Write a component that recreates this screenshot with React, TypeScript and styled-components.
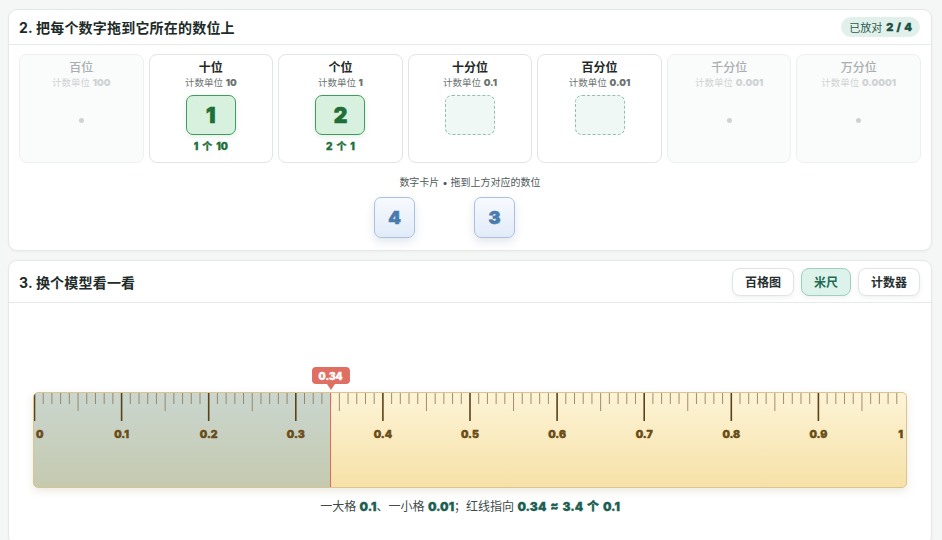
import { createGlobalStyle, styled, css } from "styled-components";

const GlobalStyle = createGlobalStyle`
  html, body {
    margin: 0;
    padding: 0;
    background: #f5f6f6;
  }
  body {
    font-family: Inter, "Noto Sans CJK SC", sans-serif;
    color: #1f2a28;
  }
`;

const Page = styled.div`
  display: flex;
  flex-direction: column;
  gap: 9px;
  padding: 9px 10px 0 8px;
`;

const Card = styled.section`
  background: #fff;
  border: 1px solid #e4e8e7;
  border-radius: 9px;
  box-shadow: 0 1px 3px rgba(30, 50, 45, 0.04);
`;

const CardHeader = styled.header<{ $h: number }>`
  display: flex;
  align-items: center;
  justify-content: space-between;
  height: ${(p) => p.$h}px;
  padding: 0 11px 0 10px;
  border-bottom: 1px solid #e6eae9;
`;

const Title = styled.h2`
  margin: 0;
  font-size: 14px;
  font-weight: 700;
  color: #1d2b29;
  letter-spacing: 0.2px;
`;

const Badge = styled.div`
  height: 20px;
  padding: 0 8px;
  border-radius: 10px;
  background: #e2f0eb;
  color: #2a5c50;
  font-size: 11px;
  display: flex;
  align-items: center;
  gap: 4px;
  b {
    font-weight: 900;
    color: #1b4f43;
    word-spacing: 1px;
    -webkit-text-stroke: 0.3px #1b4f43;
  }
`;

const PlaceRow = styled.div`
  display: grid;
  grid-template-columns: repeat(7, 1fr);
  gap: 5px;
  padding: 9px 10px 0 10px;
`;

const PlaceCard = styled.div<{ $faded?: boolean }>`
  height: 109px;
  box-sizing: border-box;
  border: 1px solid ${(p) => (p.$faded ? "#eef0f0" : "#e1e5e4")};
  background: ${(p) => (p.$faded ? "#fafbfb" : "#fff")};
  border-radius: 8px;
  display: flex;
  flex-direction: column;
  align-items: center;
  padding-top: 5px;
`;

const PlaceName = styled.div<{ $faded?: boolean }>`
  font-size: 12px;
  font-weight: ${(p) => (p.$faded ? 500 : 700)};
  color: ${(p) => (p.$faded ? "#a9aeae" : "#1f2a28")};
  line-height: 16px;
`;

const PlaceUnit = styled.div<{ $faded?: boolean }>`
  font-size: 9.5px;
  line-height: 14px;
  color: ${(p) => (p.$faded ? "#cfd3d3" : "#6b7371")};
  b {
    font-weight: 900;
  }
`;

const Slot = styled.div<{ $filled?: boolean }>`
  margin-top: 5px;
  width: 50px;
  height: 40px;
  box-sizing: border-box;
  border-radius: 7px;
  display: flex;
  align-items: center;
  justify-content: center;
  font-size: 21px;
  font-weight: 900;
  ${(p) =>
    p.$filled
      ? css`
          background: #d8f1de;
          border: 1.5px solid #3e9d5b;
          color: #1f6e37;
          -webkit-text-stroke: 0.7px #1f6e37;
          box-shadow: 0 2px 5px rgba(40, 120, 70, 0.12);
        `
      : css`
          background: #eff8f5;
          border: 1.5px dashed #8fc1ae;
        `}
`;

const SlotNote = styled.div`
  margin-top: 3px;
  font-size: 10px;
  font-weight: 900;
  word-spacing: 2px;
  color: #22703a;
  -webkit-text-stroke: 0.3px #22703a;
`;

const Dot = styled.div`
  margin-top: 28px;
  width: 5px;
  height: 5px;
  border-radius: 50%;
  background: #cdd2d2;
`;

const Tray = styled.div`
  display: flex;
  flex-direction: column;
  align-items: center;
  padding: 12px 0 12px;
`;

const TrayHint = styled.div`
  font-size: 10px;
  color: #4f5957;
  line-height: 14px;
`;

const TrayCards = styled.div`
  display: flex;
  gap: 59px;
  margin-top: 8px;
  padding-right: 51px;
`;

const DigitCard = styled.div`
  width: 41px;
  height: 41px;
  box-sizing: border-box;
  border-radius: 7px;
  border: 1.5px solid #a9c1dd;
  background: linear-gradient(#f7fafe, #e1ebf8);
  color: #4a7bae;
  -webkit-text-stroke: 0.6px #4a7bae;
  font-size: 18px;
  font-weight: 900;
  display: flex;
  align-items: center;
  justify-content: center;
  box-shadow: 0 4px 10px rgba(70, 100, 140, 0.16);
`;

const ModeGroup = styled.div`
  display: flex;
  gap: 7px;
`;

const ModeButton = styled.button<{ $active?: boolean }>`
  height: 28px;
  padding: 0 12px;
  border-radius: 8px;
  font-family: inherit;
  font-size: 12px;
  font-weight: 600;
  border: 1px solid ${(p) => (p.$active ? "#9fd0bd" : "#e0e5e4")};
  background: ${(p) => (p.$active ? "#ddf2ea" : "#fff")};
  color: ${(p) => (p.$active ? "#1f6b55" : "#27302f")};
  box-shadow: 0 2px 5px rgba(30, 60, 50, 0.07);
`;

const ModelArea = styled.div`
  display: flex;
  flex-direction: column;
  align-items: center;
  padding: 64px 0 30px;
`;

const RulerWrap = styled.div`
  position: relative;
  width: 874px;
  padding-top: 25px;
`;

const Ruler = styled.div`
  position: relative;
  height: 96px;
  box-sizing: border-box;
  border: 1px solid #d8c58f;
  border-radius: 5px;
  overflow: hidden;
  background: linear-gradient(#fdf4d7, #f6e1a7);
  box-shadow: 0 3px 8px rgba(120, 100, 40, 0.15);
`;

const Shade = styled.div`
  position: absolute;
  left: 0;
  top: 0;
  bottom: 0;
  background: rgba(110, 160, 190, 0.36);
`;

const RedLine = styled.div`
  position: absolute;
  top: 0;
  bottom: 0;
  width: 1.5px;
  background: #e0695a;
`;

const Pointer = styled.div`
  position: absolute;
  top: 0;
  transform: translateX(-50%);
  height: 17px;
  padding: 0 7px;
  border-radius: 4px;
  background: #de6f62;
  color: #fff;
  font-size: 10px;
  font-weight: 900;
  -webkit-text-stroke: 0.3px #fff;
  display: flex;
  align-items: center;
  &::after {
    content: "";
    position: absolute;
    left: 50%;
    bottom: -6px;
    transform: translateX(-50%);
    border-left: 4px solid transparent;
    border-right: 4px solid transparent;
    border-top: 6px solid #de6f62;
  }
`;

const TickSvg = styled.svg`
  position: absolute;
  left: 0;
  top: 0;
`;

const Caption = styled.div`
  margin-top: 9px;
  font-size: 12px;
  color: #3e4a48;
  b {
    font-weight: 900;
    color: #1c5f52;
    word-spacing: 1.5px;
    -webkit-text-stroke: 0.3px #1c5f52;
  }
`;

const places = [
  { name: "百位", unit: "100", faded: true },
  { name: "十位", unit: "10", digit: "1", note: "1 个 10" },
  { name: "个位", unit: "1", digit: "2", note: "2 个 1" },
  { name: "十分位", unit: "0.1" },
  { name: "百分位", unit: "0.01" },
  { name: "千分位", unit: "0.001", faded: true },
  { name: "万分位", unit: "0.0001", faded: true },
];

const W = 872;
const px = (v: number) => 0.5 + v * 871;

const Ticks = () => {
  const ticks = [];
  for (let i = 0; i < 100; i++) {
    const x = px(i / 100);
    const major = i % 10 === 0;
    const mid = i % 5 === 0;
    ticks.push(
      <line
        key={i}
        x1={x}
        x2={x}
        y1={0}
        y2={major ? 28 : mid ? 18 : 11}
        stroke={major ? "#5b4218" : "#8c7450"}
        strokeWidth={major ? 1.6 : 1}
        opacity={major ? 1 : 0.8}
      />
    );
  }
  const labels = [];
  for (let i = 0; i <= 10; i++) {
    const text = i === 0 ? "0" : i === 10 ? "1" : `0.${i}`;
    labels.push(
      <text
        key={i}
        x={i === 0 ? 2 : i === 10 ? W - 3 : px(i / 10)}
        y={45}
        textAnchor={i === 0 ? "start" : i === 10 ? "end" : "middle"}
        fontSize={10.5}
        fontWeight={900}
        fill="#6a4c18"
        stroke="#6a4c18"
        strokeWidth={0.4}
        fontFamily="Inter, sans-serif"
      >
        {text}
      </text>
    );
  }
  return (
    <TickSvg width={W} height={94}>
      {ticks}
      {labels}
    </TickSvg>
  );
};

export default function App() {
  const value = 0.34;
  const lineX = px(value);
  return (
    <>
      <GlobalStyle />
      <Page>
        <Card>
          <CardHeader $h={34}>
            <Title>2. 把每个数字拖到它所在的数位上</Title>
            <Badge>
              已放对 <b>2 / 4</b>
            </Badge>
          </CardHeader>
          <PlaceRow>
            {places.map((p) => (
              <PlaceCard key={p.name} $faded={p.faded}>
                <PlaceName $faded={p.faded}>{p.name}</PlaceName>
                <PlaceUnit $faded={p.faded}>
                  计数单位 <b>{p.unit}</b>
                </PlaceUnit>
                {p.faded ? (
                  <Dot />
                ) : (
                  <Slot $filled={!!p.digit}>{p.digit}</Slot>
                )}
                {p.note && <SlotNote>{p.note}</SlotNote>}
              </PlaceCard>
            ))}
          </PlaceRow>
          <Tray>
            <TrayHint>数字卡片 • 拖到上方对应的数位</TrayHint>
            <TrayCards>
              <DigitCard>4</DigitCard>
              <DigitCard>3</DigitCard>
            </TrayCards>
          </Tray>
        </Card>

        <Card>
          <CardHeader $h={41}>
            <Title>3. 换个模型看一看</Title>
            <ModeGroup>
              <ModeButton>百格图</ModeButton>
              <ModeButton $active>米尺</ModeButton>
              <ModeButton>计数器</ModeButton>
            </ModeGroup>
          </CardHeader>
          <ModelArea>
            <RulerWrap>
              <Ruler>
                <Shade style={{ width: lineX }} />
                <Ticks />
                <RedLine style={{ left: lineX - 0.75 }} />
              </Ruler>
              <Pointer style={{ left: lineX + 1 }}>0.34</Pointer>
            </RulerWrap>
            <Caption>
              一大格 <b>0.1</b>、一小格 <b>0.01</b>；红线指向{" "}
              <b>0.34 ≈ 3.4 个 0.1</b>
            </Caption>
          </ModelArea>
        </Card>
      </Page>
    </>
  );
}
